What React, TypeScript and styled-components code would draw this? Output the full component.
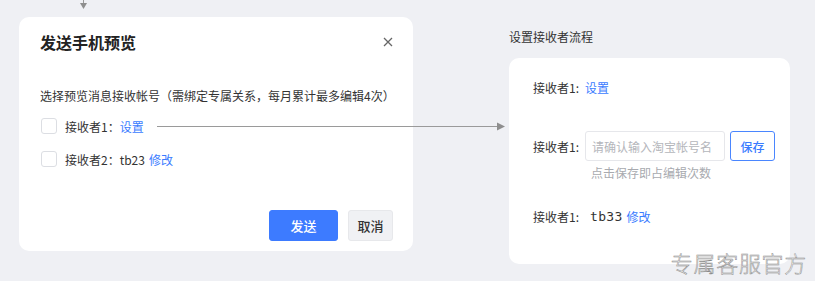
import React from "react";
import styled, { createGlobalStyle } from "styled-components";

const GlobalStyle = createGlobalStyle`
	body {
		margin: 0;
		background: #eff0f4;
		font-family: "Noto Sans CJK SC", "Liberation Sans", sans-serif;
	}
`;

const Page = styled.div`
	position: relative;
	width: 815px;
	height: 281px;
	box-sizing: border-box;
	padding: 17px 0 0 19px;
	display: flex;
	gap: 96px;
	background: #eff0f4;
	overflow: hidden;
`;

const Dialog = styled.div`
	width: 394px;
	height: 234px;
	box-sizing: border-box;
	background: #fff;
	border-radius: 10px;
	padding: 13px 20px 10px 21px;
	display: flex;
	flex-direction: column;
`;

const DialogHeader = styled.div`
	display: flex;
	align-items: center;
	justify-content: space-between;
	height: 24px;
`;

const DialogTitle = styled.h2`
	margin: 0;
	font-size: 16px;
	font-weight: 700;
	color: #222;
	line-height: 24px;
`;

const CloseIcon = styled.svg`
	width: 10px;
	height: 10px;
`;

const Hint = styled.p`
	margin: 32px 0 8px;
	font-size: 12px;
	line-height: 20px;
	color: #333;
`;

const CheckRow = styled.label`
	display: flex;
	align-items: center;
	height: 24px;
	margin-bottom: 9px;
	font-size: 12px;
	color: #333;
	white-space: nowrap;
`;

const CheckBox = styled.span`
	width: 16px;
	height: 16px;
	box-sizing: border-box;
	border: 1px solid #dcdee3;
	border-radius: 3px;
	background: #fff;
	margin: 0 8px 0 1px;
`;

const Link = styled.a<{ $gap?: number }>`
	color: #3b7cff;
	text-decoration: none;
	margin-left: ${(p) => p.$gap ?? 0}px;
`;

const Footer = styled.div`
	margin-top: auto;
	display: flex;
	justify-content: flex-end;
	gap: 10px;
`;

const Button = styled.button<{ $primary?: boolean }>`
	height: 31px;
	box-sizing: border-box;
	padding: 0;
	width: ${(p) => (p.$primary ? "69px" : "45px")};
	border-radius: 3px;
	border: 1px solid ${(p) => (p.$primary ? "#3d7bff" : "#e7e8eb")};
	background: ${(p) => (p.$primary ? "#3d7bff" : "#f0f1f4")};
	color: ${(p) => (p.$primary ? "#fff" : "#333")};
	font-family: inherit;
	font-size: 13px;
	font-weight: 500;
`;

const FlowColumn = styled.div`
	padding-top: 10px;
	display: flex;
	flex-direction: column;
`;

const FlowTitle = styled.div`
	font-size: 12px;
	line-height: 20px;
	color: #333;
	margin-bottom: 11px;
`;

const FlowCard = styled.div`
	width: 281px;
	height: 206px;
	box-sizing: border-box;
	background: #fff;
	border-radius: 10px;
	padding: 19px 14px 0 24px;
	display: flex;
	flex-direction: column;
`;

const FlowRow = styled.div<{ $top?: number }>`
	display: flex;
	align-items: center;
	min-height: 20px;
	margin-top: ${(p) => p.$top ?? 0}px;
	font-size: 12px;
	color: #333;
	white-space: nowrap;
`;

const FlowLabel = styled.span`
	width: 52px;
	flex-shrink: 0;
	white-space: nowrap;
`;

const Input = styled.div`
	width: 140px;
	height: 30px;
	box-sizing: border-box;
	border: 1px solid #e6e7eb;
	border-radius: 3px;
	padding-left: 6px;
	display: flex;
	align-items: center;
	color: #b4b6bb;
	font-size: 12px;
`;

const SaveButton = styled.button`
	width: 45px;
	height: 30px;
	margin-left: 5px;
	box-sizing: border-box;
	border: 1px solid #4a86ff;
	border-radius: 3px;
	background: #fff;
	color: #3b7cff;
	font-family: inherit;
	font-size: 12px;
	font-weight: 500;
	padding: 0;
`;

const SubHint = styled.div`
	margin: 3px 0 0 58px;
	font-size: 12px;
	line-height: 18px;
	color: #a8aaaf;
`;

const Mono = styled.span`
	margin-left: 5px;
	font-family: "DejaVu Sans Mono", monospace;
	font-size: 13px;
	color: #333;
	letter-spacing: 0.3px;
`;

const Connector = styled.svg`
	position: absolute;
	left: 157px;
	top: 122px;
	width: 348px;
	height: 9px;
`;

const TopArrow = styled.svg`
	position: absolute;
	left: 79px;
	top: 0;
	width: 9px;
	height: 10px;
`;

const Watermark = styled.div`
	position: absolute;
	right: 8px;
	bottom: 7px;
	font-size: 22px;
	font-weight: 300;
	letter-spacing: 0.7px;
	color: #fff;
	-webkit-text-stroke: 0.5px #8a8a8a;
	line-height: 24px;
`;

export default function App() {
	return (
		<>
			<GlobalStyle />
			<Page>
				<TopArrow viewBox="0 0 9 10">
					<line x1="4.5" y1="0" x2="4.5" y2="4" stroke="#9a9a9a" strokeWidth="1" />
					<polygon points="1,3 8,3 4.5,9" fill="#8e8e8e" />
				</TopArrow>
				<Dialog>
					<DialogHeader>
						<DialogTitle>发送手机预览</DialogTitle>
						<CloseIcon viewBox="0 0 10 10">
							<path d="M1 1L9 9M9 1L1 9" stroke="#666" strokeWidth="1.3" />
						</CloseIcon>
					</DialogHeader>
					<Hint>选择预览消息接收帐号（需绑定专属关系，每月累计最多编辑4次）</Hint>
					<CheckRow>
						<CheckBox />
						接收者1：<Link>设置</Link>
					</CheckRow>
					<CheckRow>
						<CheckBox />
						接收者2：tb23<Link $gap={4}>修改</Link>
					</CheckRow>
					<Footer>
						<Button $primary>发送</Button>
						<Button>取消</Button>
					</Footer>
				</Dialog>
				<FlowColumn>
					<FlowTitle>设置接收者流程</FlowTitle>
					<FlowCard>
						<FlowRow>
							<FlowLabel>接收者1:</FlowLabel>
							<Link>设置</Link>
						</FlowRow>
						<FlowRow $top={34}>
							<FlowLabel>接收者1:</FlowLabel>
							<Input>请确认输入淘宝帐号名</Input>
							<SaveButton>保存</SaveButton>
						</FlowRow>
						<SubHint>点击保存即占编辑次数</SubHint>
						<FlowRow $top={24}>
							<FlowLabel>接收者1:</FlowLabel>
							<Mono>tb33</Mono>
							<Link $gap={4}>修改</Link>
						</FlowRow>
					</FlowCard>
				</FlowColumn>
				<Connector viewBox="0 0 348 9">
					<line x1="0" y1="4.5" x2="341" y2="4.5" stroke="#9a9a9a" strokeWidth="1" />
					<polygon points="340,0.5 348,4.5 340,8.5" fill="#8e8e8e" />
				</Connector>
				<Watermark>专属客服官方</Watermark>
			</Page>
		</>
	);
}
